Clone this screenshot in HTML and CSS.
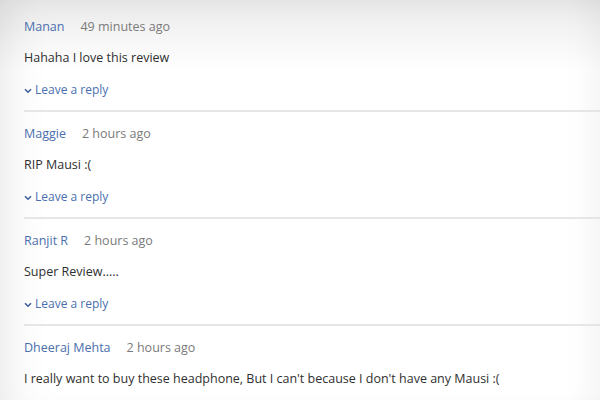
FILE: index.html
```html
<!DOCTYPE html>
<html>
<head>
<meta charset="utf-8">
<link rel="stylesheet" href="styles.css">
</head>
<body>
<div class="page">
  <div class="comment">
    <div class="meta"><span class="name">Manan</span><span class="time">49 minutes ago</span></div>
    <div class="text">Hahaha I love this review</div>
    <div class="reply"><svg class="chev" viewBox="0 0 8 6" width="8" height="6"><path d="M1 1.2 L4 4.2 L7 1.2" fill="none" stroke="#3d5f9c" stroke-width="1.6"/></svg>Leave a reply</div>
  </div>
  <div class="comment">
    <div class="meta"><span class="name">Maggie</span><span class="time">2 hours ago</span></div>
    <div class="text">RIP Mausi :(</div>
    <div class="reply"><svg class="chev" viewBox="0 0 8 6" width="8" height="6"><path d="M1 1.2 L4 4.2 L7 1.2" fill="none" stroke="#3d5f9c" stroke-width="1.6"/></svg>Leave a reply</div>
  </div>
  <div class="comment">
    <div class="meta"><span class="name">Ranjit R</span><span class="time">2 hours ago</span></div>
    <div class="text">Super Review.....</div>
    <div class="reply"><svg class="chev" viewBox="0 0 8 6" width="8" height="6"><path d="M1 1.2 L4 4.2 L7 1.2" fill="none" stroke="#3d5f9c" stroke-width="1.6"/></svg>Leave a reply</div>
  </div>
  <div class="comment last">
    <div class="meta"><span class="name">Dheeraj Mehta</span><span class="time">2 hours ago</span></div>
    <div class="text">I really want to buy these headphone, But I can't because I don't have any Mausi :(</div>
  </div>
</div>
</body>
</html>
```
FILE: styles.css
```css
html, body {
  margin: 0;
  padding: 0;
  background: #fff;
}
body {
  font-family: "Open Sans", "Noto Sans", sans-serif;
  font-size: 12.5px;
  color: #333;
  width: 600px;
  height: 400px;
  overflow: hidden;
}
.page {
  height: 400px;
  padding: 5px 0 0 24px;
  box-sizing: border-box;
  box-shadow: inset 30px 10px 50px -30px rgba(0,0,0,0.12), inset -30px 0 40px -30px rgba(0,0,0,0.07);
  background: linear-gradient(#ebebeb 0, #fff 70px);
}
.comment {
  padding: 13px 0 11px;
  border-bottom: 2px solid #e6e6e6;
}
.comment.last {
  border-bottom: none;
}
.meta, .text, .reply {
  line-height: 18px;
  height: 18px;
  white-space: nowrap;
}
.name {
  color: #4a6fae;
  margin-right: 16px;
}
.time {
  color: #7a7a7a;
}
.text {
  margin-top: 13px;
  color: #2f2f2f;
}
.reply {
  margin-top: 14px;
  color: #4a6fae;
  font-size: 12px;
  display: flex;
  align-items: center;
}
.chev {
  margin-right: 3px;
  margin-top: 1px;
}
```
